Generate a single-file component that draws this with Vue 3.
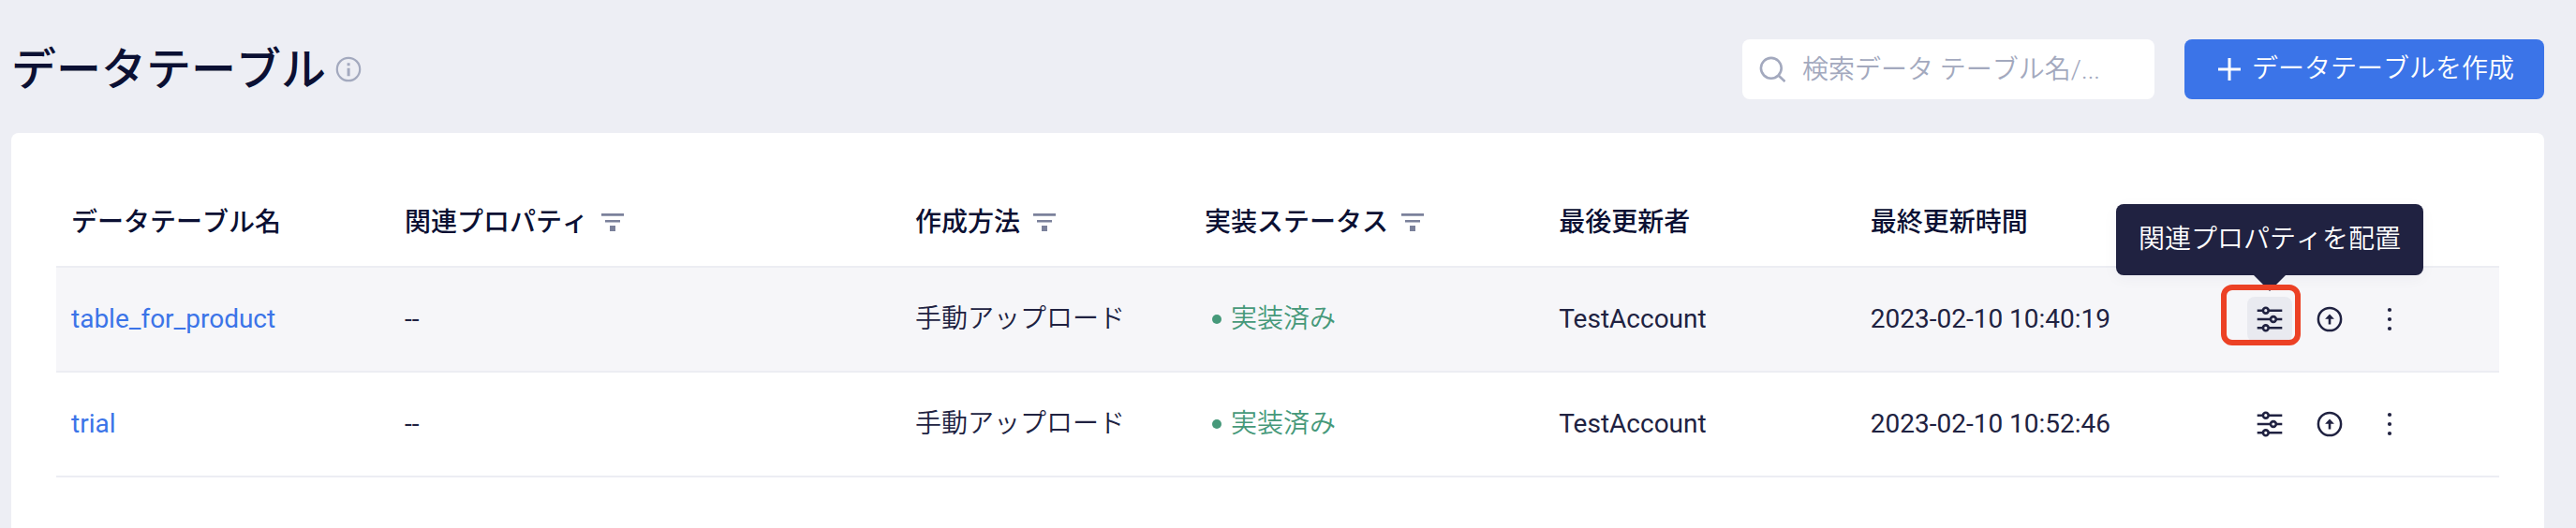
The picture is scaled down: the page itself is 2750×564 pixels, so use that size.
<script setup>
import { ref } from 'vue'

const keyword = ref('')

const columns = [
  { key: 'name', label: 'データテーブル名', filter: false },
  { key: 'property', label: '関連プロパティ', filter: true },
  { key: 'method', label: '作成方法', filter: true },
  { key: 'status', label: '実装ステータス', filter: true },
  { key: 'updater', label: '最後更新者', filter: false },
  { key: 'updated', label: '最終更新時間', filter: false },
]

const rows = [
  {
    name: 'table_for_product',
    property: '--',
    method: '手動アップロード',
    status: '実装済み',
    updater: 'TestAccount',
    updated: '2023-02-10 10:40:19',
    active: true,
  },
  {
    name: 'trial',
    property: '--',
    method: '手動アップロード',
    status: '実装済み',
    updater: 'TestAccount',
    updated: '2023-02-10 10:52:46',
    active: false,
  },
]
</script>

<template>
  <div class="page">
    <header class="topbar">
      <h1 class="title">データテーブル</h1>
      <button class="info" type="button" aria-label="ヘルプ">
        <svg width="28" height="28" viewBox="0 0 28 28" fill="none">
          <circle cx="14" cy="14" r="12.2" stroke="currentColor" stroke-width="2.2" />
          <path d="M12.6 7.2h3v3h-3zM12.6 12.8h3v8.4h-3z" fill="currentColor" />
        </svg>
      </button>

      <label class="search">
        <svg width="28" height="28" viewBox="0 0 28 28" fill="none" stroke="currentColor" stroke-width="2.6">
          <circle cx="12.8" cy="12.8" r="10.9" />
          <path d="M20.5 20.5l7 6.6" />
        </svg>
        <input
          v-model="keyword"
          class="search-input"
          type="text"
          aria-label="検索"
          placeholder="検索データ テーブル名/..."
        />
      </label>

      <button class="create" type="button">
        <svg width="28" height="28" viewBox="0 0 28 28" fill="none" stroke="currentColor" stroke-width="3">
          <path d="M16 2v24M4 14h24" />
        </svg>
        <span>データテーブルを作成</span>
      </button>
    </header>

    <main class="card">
      <table class="table">
        <colgroup>
          <col v-for="c in columns" :key="c.key" :class="'col-' + c.key" />
          <col />
        </colgroup>
        <thead>
          <tr>
            <th v-for="c in columns" :key="c.key" scope="col">
              <div class="head">
                <span>{{ c.label }}</span>
                <button v-if="c.filter" class="filter" type="button" :aria-label="c.label + 'フィルター'">
                  <svg width="24" height="20" viewBox="0 0 24 20" fill="currentColor">
                    <path d="M0 0h24v2.8H0zM4 7h16v2.6H4zM9 13h6v6H9z" />
                  </svg>
                </button>
              </div>
            </th>
            <td></td>
          </tr>
        </thead>
        <tbody>
          <tr v-for="r in rows" :key="r.name" :class="{ active: r.active }">
            <td><a class="link" href="#">{{ r.name }}</a></td>
            <td>{{ r.property }}</td>
            <td class="light">{{ r.method }}</td>
            <td><span class="status light">{{ r.status }}</span></td>
            <td>{{ r.updater }}</td>
            <td>{{ r.updated }}</td>
            <td>
              <div class="actions">
                <div class="action-wrap">
                  <button class="action" :class="{ hovered: r.active }" type="button" aria-label="関連プロパティを配置">
                    <svg width="28" height="28" viewBox="0 0 28 28" fill="none" stroke="currentColor" stroke-width="2.6">
                      <path d="M.7 4.7h6M13 4.7h14.3M.7 14h14M21 14h6.3M.7 23.3h6M13 23.3h14.3" />
                      <circle cx="9.8" cy="4.7" r="2.9" />
                      <circle cx="17.9" cy="14" r="2.9" />
                      <circle cx="9.8" cy="23.3" r="2.9" />
                    </svg>
                  </button>
                  <div v-if="r.active" class="tooltip light" role="tooltip">関連プロパティを配置</div>
                  <div v-if="r.active" class="marker"></div>
                </div>
                <button class="action" type="button" aria-label="アップロード">
                  <svg width="28" height="28" viewBox="0 0 28 28" fill="none">
                    <circle cx="14" cy="14" r="12.1" stroke="currentColor" stroke-width="2.5" />
                    <path d="M14 8.6l4.9 5.2h-3.6v5.6h-2.6v-5.6H9.1z" fill="currentColor" />
                  </svg>
                </button>
                <button class="action" type="button" aria-label="その他">
                  <svg width="28" height="28" viewBox="0 0 28 28" fill="currentColor">
                    <circle cx="14" cy="4" r="2.1" />
                    <circle cx="14" cy="14" r="2.1" />
                    <circle cx="14" cy="24" r="2.1" />
                  </svg>
                </button>
              </div>
            </td>
          </tr>
        </tbody>
      </table>
    </main>
  </div>
</template>

<style>
body {
  margin: 0;
  background: #edeef4;
}
</style>

<style scoped>
.page {
  box-sizing: border-box;
  min-height: 100vh;
  display: flex;
  flex-direction: column;
  padding: 42px 34px 0 12px;
  background: #edeef4;
  color: #202241;
  font-family: Roboto, "Noto Sans CJK JP", sans-serif;
  font-size: 28px;
  line-height: 40px;
}

svg {
  display: block;
  flex: none;
}

button {
  margin: 0;
  padding: 0;
  border: 0;
  background: none;
  color: inherit;
  font: inherit;
  cursor: pointer;
}

/* Kana stay on their full-width grid */
.title,
.search-input,
.create,
.head,
.light {
  font-kerning: none;
}

.create,
.search-input,
.light {
  font-weight: 350;
}

.topbar {
  display: flex;
  align-items: center;
  margin-bottom: 36px;
}

.title {
  margin: 0;
  padding-top: 2px;
  color: #0b1033;
  font-size: 48px;
  font-weight: 500;
  line-height: 62px;
}

.info {
  margin-left: 10px;
  color: #a3a9be;
}

.search {
  box-sizing: border-box;
  display: flex;
  align-items: center;
  gap: 18px;
  width: 440px;
  height: 64px;
  margin-left: auto;
  padding: 0 18px;
  border-radius: 8px;
  background: #fff;
  color: #a3a9be;
}

.search-input {
  flex: 1;
  min-width: 0;
  padding: 0;
  border: 0;
  outline: 0;
  background: none;
  color: #202241;
  font-family: inherit;
  font-size: 28px;
}

.search-input::placeholder {
  color: #a3a9be;
  opacity: 1;
}

.create {
  box-sizing: border-box;
  display: flex;
  align-items: center;
  gap: 12px;
  height: 64px;
  margin-left: 32px;
  padding: 0 32px;
  border-radius: 8px;
  background: #3b74e8;
  color: #fff;
}

.card {
  flex: 1;
  padding: 44px 48px;
  border-radius: 8px 8px 0 0;
  background: #fff;
}

.table {
  width: 100%;
  table-layout: fixed;
  border-collapse: separate;
  border-spacing: 0;
}

.col-name { width: 13.65%; }
.col-property { width: 20.9%; }
.col-method { width: 11.85%; }
.col-status { width: 14.5%; }
.col-updater { width: 12.75%; }
.col-updated { width: 15.42%; }

th,
td {
  box-sizing: border-box;
  height: 112px;
  padding: 0 16px;
  border-bottom: 2px solid #ecedf3;
  text-align: left;
  white-space: nowrap;
}

thead th,
thead td {
  height: 100px;
  padding-top: 6px;
  color: #0b1033;
  font-weight: 500;
}

.active td {
  background: #f6f6f9;
}

.head {
  display: flex;
  align-items: center;
  gap: 14px;
}

.filter {
  color: #7b819b;
}

.link {
  color: #3b74e8;
  text-decoration: none;
}

.status {
  display: flex;
  align-items: center;
  gap: 10px;
  padding-left: 8px;
  color: #46997a;
}

.status::before {
  content: "";
  width: 10px;
  height: 10px;
  border-radius: 50%;
  background: currentColor;
}

.actions {
  display: flex;
  gap: 16px;
}

.action-wrap {
  position: relative;
}

.action {
  display: flex;
  align-items: center;
  justify-content: center;
  width: 48px;
  height: 48px;
  border-radius: 8px;
}

.hovered {
  background: #e9eaf0;
}

.tooltip {
  position: absolute;
  bottom: 71px;
  left: 50%;
  padding: 18px 24px;
  border-radius: 8px;
  background: #202241;
  box-shadow: 0 4px 16px rgba(32, 34, 65, 0.04);
  color: #fff;
  transform: translateX(-50%);
}

.tooltip::after {
  content: "";
  position: absolute;
  top: 100%;
  left: 50%;
  margin-left: -17px;
  border: 17px solid transparent;
  border-top-color: #202241;
  border-bottom: 0;
}

/* Highlight frame around the configure action */
.marker {
  position: absolute;
  top: -13px;
  left: -28px;
  box-sizing: border-box;
  width: 85px;
  height: 65px;
  border: 6px solid #ec4125;
  border-radius: 12px;
  pointer-events: none;
}
</style>
